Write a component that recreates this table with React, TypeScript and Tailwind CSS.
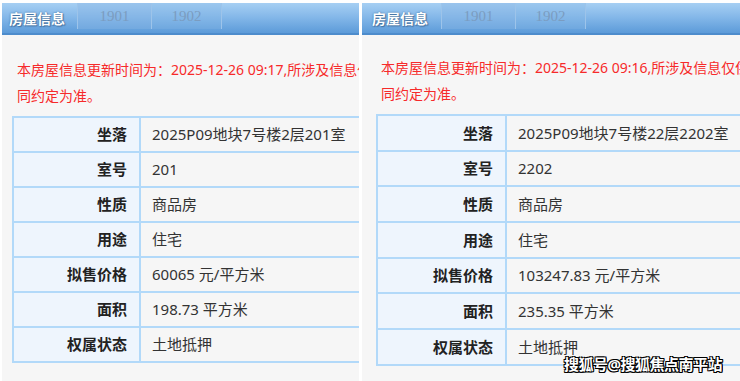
import React from "react";

type Row = [string, string];

const leftRows: Row[] = [
  ["坐落", "2025P09地块7号楼2层201室"],
  ["室号", "201"],
  ["性质", "商品房"],
  ["用途", "住宅"],
  ["拟售价格", "60065 元/平方米"],
  ["面积", "198.73 平方米"],
  ["权属状态", "土地抵押"],
];

const rightRows: Row[] = [
  ["坐落", "2025P09地块7号楼22层2202室"],
  ["室号", "2202"],
  ["性质", "商品房"],
  ["用途", "住宅"],
  ["拟售价格", "103247.83 元/平方米"],
  ["面积", "235.35 平方米"],
  ["权属状态", "土地抵押"],
];

const font = { fontFamily: '"Noto Sans", "Noto Sans CJK SC", sans-serif' };
const serif = { fontFamily: '"Liberation Serif", serif' };

function Header({ right }: { right?: boolean }) {
  return (
    <div className="relative flex h-[32px] items-center border-b-2 border-[#4d8ccc] bg-gradient-to-b from-[#a6cff3] via-[#82b6e8] to-[#5c9bd9]">
      <div
        className={`text-[14px] font-bold text-white ${right ? "pl-[10px]" : "pl-[7px]"}`}
        style={{ ...font, textShadow: "0 0 2px #3a6a9a, 1px 1px 1px #4a76a4" }}
      >
        房屋信息
      </div>
      <div className={`flex h-[26px] self-start ${right ? "ml-[13px]" : "ml-[12px]"}`}>
        <div
          className="flex w-[75px] items-center justify-center border-x border-[#9dc4ea] bg-[#86b5e3]/40 text-[15px] text-[#7b9cc0]"
          style={serif}
        >
          1901
        </div>
        <div
          className="flex w-[70px] items-center justify-center border-r border-[#9dc4ea] bg-[#86b5e3]/30 text-[15px] text-[#7b9cc0]"
          style={serif}
        >
          1902
        </div>
      </div>
    </div>
  );
}

function Table({ rows, labelW, rowH }: { rows: Row[]; labelW: string; rowH: string }) {
  return (
    <div className="w-[480px] border-t-2 border-l-2 border-[#b2d9f9]">
      {rows.map(([k, v]) => (
        <div key={k} className={`flex border-b-2 border-[#b2d9f9] ${rowH}`}>
          <div
            className={`flex items-center justify-end border-r-2 border-[#b2d9f9] bg-[#eef5fd] pr-[12px] text-[15px] font-bold text-[#222] ${labelW}`}
            style={font}
          >
            {k}
          </div>
          <div className="flex flex-1 items-center pl-[11px] text-[15px] text-[#333]" style={font}>
            {v}
          </div>
        </div>
      ))}
    </div>
  );
}

function Panel({ time, rows, right }: { time: string; rows: Row[]; right?: boolean }) {
  return (
    <div className={`h-full overflow-hidden bg-[#f6f6f6] ${right ? "flex-1" : "w-[357px]"}`}>
      <Header right={right} />
      <div
        className={`whitespace-nowrap text-[14px] leading-[26px] text-[#f62a2a] ${
          right ? "mt-[20px] pl-[19px]" : "mt-[22px] pl-[15px]"
        }`}
        style={font}
      >
        <div>本房屋信息更新时间为：2025-12-26 {time},所涉及信息仅供参考</div>
        <div>同约定为准。</div>
      </div>
      <div className={`mt-[7px] ${right ? "ml-[14px]" : "ml-[10px]"}`}>
        <Table
          rows={rows}
          labelW={right ? "w-[129px]" : "w-[127px]"}
          rowH={right ? "h-[35.7px]" : "h-[35px]"}
        />
      </div>
    </div>
  );
}

export default function App() {
  return (
    <div className="relative h-[381px] w-[740px] overflow-hidden bg-white pl-[2px] pt-[3px]">
      <div className="flex h-full gap-[3px]">
        <Panel time="09:17" rows={leftRows} />
        <Panel time="09:16" rows={rightRows} right />
      </div>
      <div
        className="absolute left-[564px] top-[353px] text-[15px] font-bold tracking-[-0.5px] text-white"
        style={{
          ...font,
          textShadow:
            "1px 1px 0 #000, -1px -1px 0 #000, 1px -1px 0 #000, -1px 1px 0 #000, 0 1px 0 #000, 1px 0 0 #000",
        }}
      >
        搜狐号@搜狐焦点南平站
      </div>
    </div>
  );
}
